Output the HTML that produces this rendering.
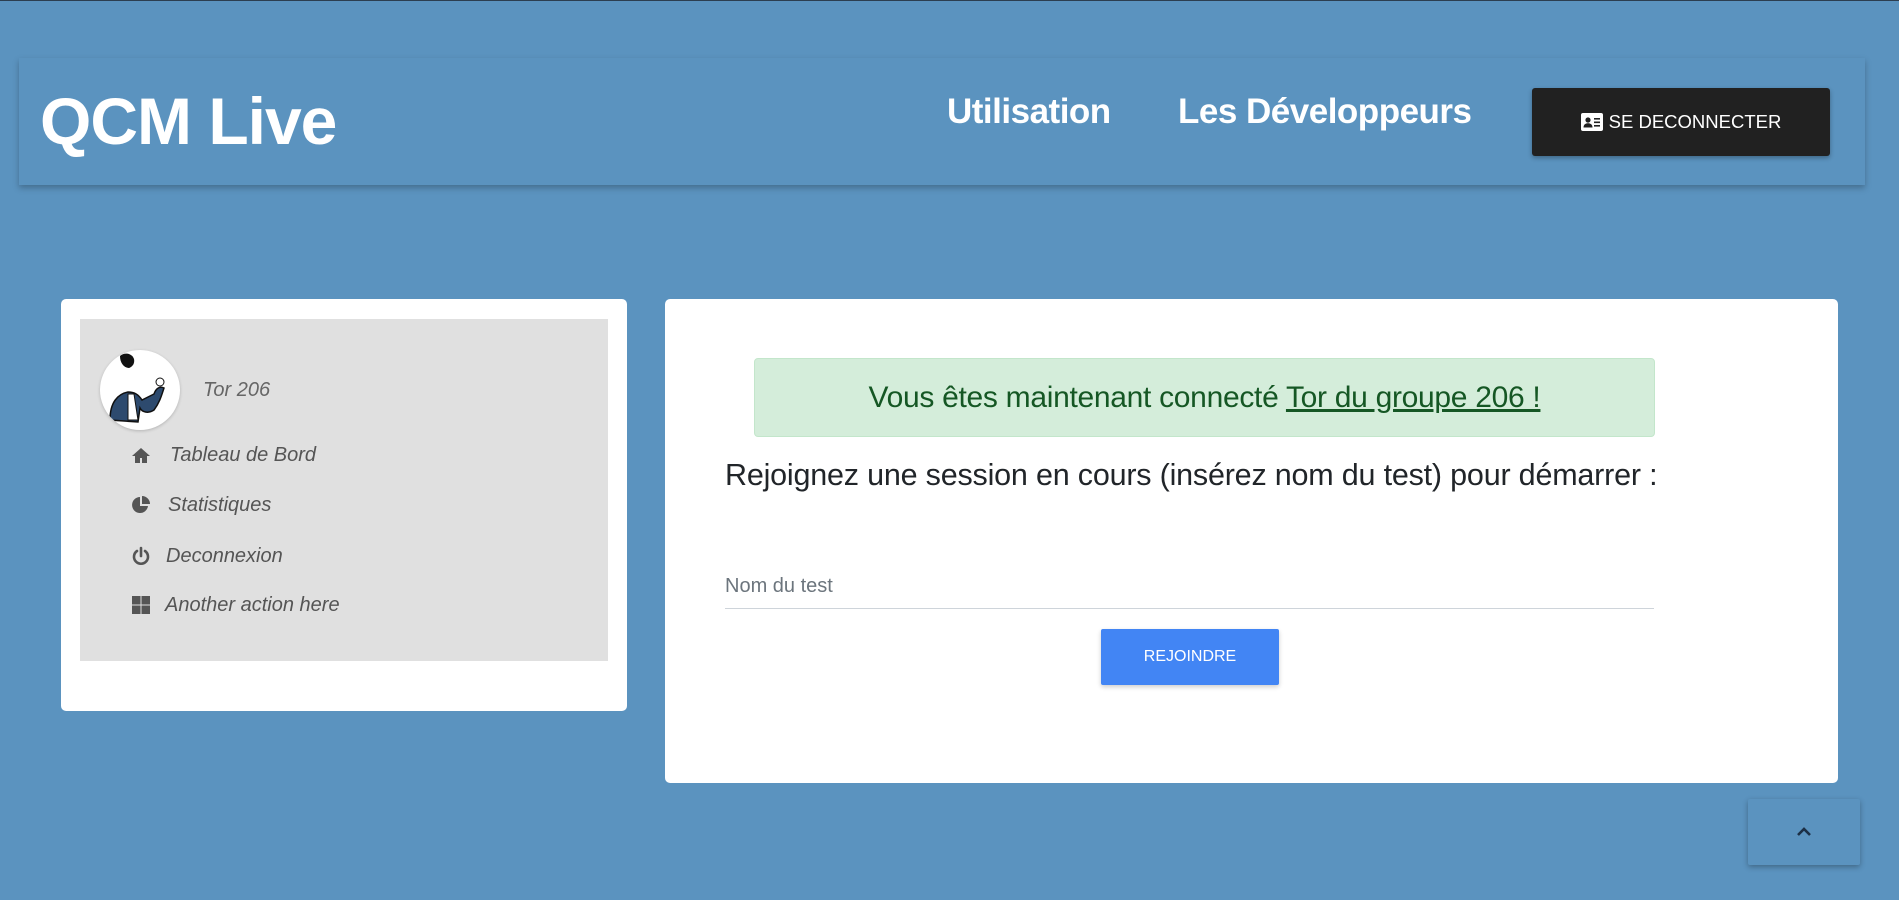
<!DOCTYPE html>
<html><head><meta charset="utf-8"><style>
*{margin:0;padding:0;box-sizing:border-box}
body{width:1899px;height:900px;overflow:hidden;background:#5b93bf;font-family:"Liberation Sans",sans-serif;position:relative;border-top:1px solid #2c3e50}
.a{position:absolute}
.nav{left:19px;top:57px;width:1846px;height:127px;background:#5b93bf;box-shadow:0 3px 6px rgba(0,0,0,.25)}
.title{left:40px;top:72px;font-size:66px;font-weight:bold;color:#fff;letter-spacing:-1px;line-height:96px}
.link{top:89px;font-size:35px;font-weight:bold;color:#fff;letter-spacing:-0.5px;line-height:44px}
.btn{left:1532px;top:87px;width:298px;height:68px;background:#212121;border-radius:3px;box-shadow:0 2px 5px rgba(0,0,0,.3);color:#fff;font-size:18.5px;display:flex;align-items:center;justify-content:center;gap:6px}
.card{background:#fff;border-radius:5px}
.menu{font-style:italic;color:#555;font-size:20px;line-height:24px}
.ic{position:absolute;left:131px;width:20px;height:20px}
</style></head><body>
<div class="a nav"></div>
<div class="a title">QCM Live</div>
<div class="a link" style="left:947px">Utilisation</div>
<div class="a link" style="left:1178px">Les Développeurs</div>
<div class="a btn"><svg width="22" height="18" viewBox="0 0 22 18"><rect x="0" y="0" width="22" height="18" rx="2" fill="#fff"/><circle cx="7" cy="7" r="2.6" fill="#212121"/><path d="M2.5 14.5c0-3 2-4.3 4.5-4.3s4.5 1.3 4.5 4.3z" fill="#212121"/><rect x="13" y="5" width="6" height="1.6" fill="#212121"/><rect x="13" y="8.5" width="6" height="1.6" fill="#212121"/><rect x="13" y="12" width="6" height="1.6" fill="#212121"/></svg>SE DECONNECTER</div>

<div class="a card" style="left:61px;top:298px;width:566px;height:412px"></div>
<div class="a" style="left:80px;top:318px;width:528px;height:342px;background:#e0e0e0"></div>
<div class="a" style="left:100px;top:349px;width:80px;height:80px;border-radius:50%;background:#fff;box-shadow:0 1px 3px rgba(0,0,0,.2);overflow:hidden">
<svg width="80" height="80" viewBox="0 0 80 80"><path d="M20 6c4-4 12-3 14 3 1 5-2 8-5 9-4 0-9-4-9-12z" fill="#111"/><path d="M10 70c0-18 8-26 18-28 6 0 10 2 14 8l12-6c2-6 6-8 10-6-2 6-4 14-10 22-6 4-12 2-14-2l-2 14z" fill="#2d4a6e" stroke="#111" stroke-width="1.5"/><path d="M28 44l6 0 4 26-10 0z" fill="#fff" stroke="#111"/><circle cx="60" cy="32" r="4" fill="#fff" stroke="#111"/></svg></div>
<div class="a menu" style="left:203px;top:377px;color:#666">Tor 206</div>
<svg class="ic" style="top:444px" viewBox="0 0 20 20"><path d="M10 3L1 11h3v7h5v-5h2v5h5v-7h3z" fill="#555"/></svg>
<div class="a menu" style="left:170px;top:442px">Tableau de Bord</div>
<svg class="ic" style="top:494px" viewBox="0 0 20 20"><path d="M9 2a8 8 0 1 0 8 9H9z" fill="#555"/><path d="M11 1v8h8a8 8 0 0 0-8-8z" fill="#555"/></svg>
<div class="a menu" style="left:168px;top:492px">Statistiques</div>
<svg class="ic" style="top:545px" viewBox="0 0 20 20"><path d="M6 5a7 7 0 1 0 8 0" fill="none" stroke="#555" stroke-width="2.6" stroke-linecap="round"/><path d="M10 2v8" stroke="#555" stroke-width="2.6" stroke-linecap="round"/></svg>
<div class="a menu" style="left:166px;top:543px">Deconnexion</div>
<svg class="ic" style="top:594px" viewBox="0 0 20 20"><rect x="1" y="1" width="8.5" height="8.5" fill="#555"/><rect x="10.5" y="1" width="8.5" height="8.5" fill="#555"/><rect x="1" y="10.5" width="8.5" height="8.5" fill="#555"/><rect x="10.5" y="10.5" width="8.5" height="8.5" fill="#555"/></svg>
<div class="a menu" style="left:165px;top:592px">Another action here</div>

<div class="a card" style="left:665px;top:298px;width:1173px;height:484px"></div>
<div class="a" style="left:754px;top:357px;width:901px;height:79px;background:#d4edda;border:1px solid #c3e6cb;border-radius:4px;color:#155724;font-size:30px;text-align:center;line-height:77px;letter-spacing:-0.3px;white-space:nowrap">Vous êtes maintenant connecté <u>Tor du groupe 206 !</u></div>
<div class="a" style="left:725px;top:455px;font-size:30.5px;color:#212529;letter-spacing:-0.2px;line-height:38px;white-space:nowrap">Rejoignez une session en cours (insérez nom du test) pour démarrer :</div>
<div class="a" style="left:725px;top:573px;font-size:20px;color:#6c757d;line-height:24px">Nom du test</div>
<div class="a" style="left:725px;top:607px;width:929px;height:1px;background:#ced4da"></div>
<div class="a" style="left:1101px;top:628px;width:178px;height:56px;background:#4285f4;border-radius:2px;box-shadow:0 2px 5px rgba(0,0,0,.2);color:#fff;font-size:16px;display:flex;align-items:center;justify-content:center">REJOINDRE</div>

<div class="a" style="left:1748px;top:798px;width:112px;height:66px;background:#5b93bf;border-radius:2px;box-shadow:0 2px 6px rgba(0,0,0,.3);display:flex;align-items:center;justify-content:center"><svg width="16" height="10" viewBox="0 0 16 10"><path d="M2 8l6-6 6 6" fill="none" stroke="#1c2f45" stroke-width="2.6"/></svg></div>
</body></html>
